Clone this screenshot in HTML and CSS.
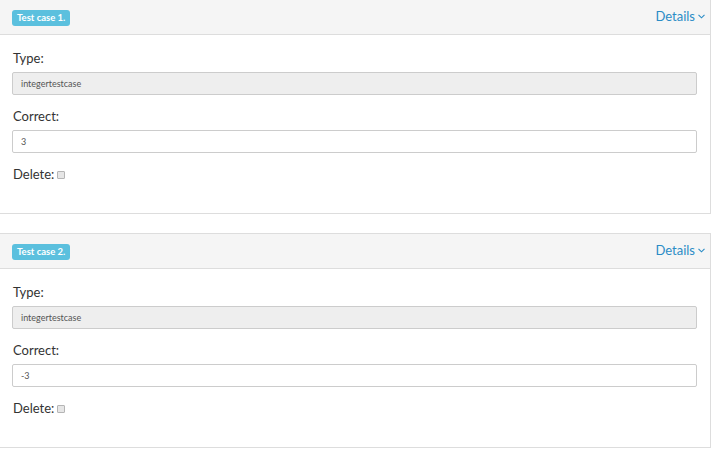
FILE: index.html
```html
<!DOCTYPE html>
<html>
<head>
<meta charset="utf-8">
<link rel="stylesheet" href="styles.css">
</head>
<body>
<div class="list">
  <div class="panel">
    <div class="panel-heading">
      <span class="badge">Test case 1.</span>
      <a class="details">Details <svg class="chev" width="7" height="5" viewBox="0 0 7 5"><path d="M0.5 0.8 L3.5 3.8 L6.5 0.8" fill="none" stroke="currentColor" stroke-width="1.1"/></svg></a>
    </div>
    <div class="panel-body">
      <div class="group">
        <label class="lbl">Type:</label>
        <div class="input disabled">integertestcase</div>
      </div>
      <div class="group">
        <label class="lbl">Correct:</label>
        <div class="input">3</div>
      </div>
      <div class="group">
        <label class="lbl">Delete: <input type="checkbox" class="cb"></label>
      </div>
    </div>
  </div>
  <div class="panel">
    <div class="panel-heading">
      <span class="badge">Test case 2.</span>
      <a class="details">Details <svg class="chev" width="7" height="5" viewBox="0 0 7 5"><path d="M0.5 0.8 L3.5 3.8 L6.5 0.8" fill="none" stroke="currentColor" stroke-width="1.1"/></svg></a>
    </div>
    <div class="panel-body">
      <div class="group">
        <label class="lbl">Type:</label>
        <div class="input disabled">integertestcase</div>
      </div>
      <div class="group">
        <label class="lbl">Correct:</label>
        <div class="input">-3</div>
      </div>
      <div class="group">
        <label class="lbl">Delete: <input type="checkbox" class="cb"></label>
      </div>
    </div>
  </div>
</div>
</body>
</html>
```
FILE: styles.css
```css
html, body {
  margin: 0;
  padding: 0;
  background: #fff;
}
body {
  font-family: Lato, "Open Sans", sans-serif;
  color: #333;
  width: 712px;
  height: 450px;
  overflow: hidden;
}
.list {
  margin: -1px 0 0 -1px;
  display: flex;
  flex-direction: column;
  gap: 19px;
}
.panel {
  width: 712px;
  box-sizing: border-box;
  border: 1px solid #dddddd;
  background: #fff;
}
.panel-heading {
  height: 35px;
  box-sizing: border-box;
  background: #f5f5f5;
  border-bottom: 1px solid #dddddd;
  display: flex;
  align-items: center;
  justify-content: space-between;
  padding: 0 5px 0 12px;
}
.badge {
  background: #5bc0de;
  color: #fff;
  font-weight: bold;
  font-size: 9.5px;
  line-height: 16px;
  height: 16px;
  padding: 0 5px;
  border-radius: 3px;
  margin-top: 1px;
}
.details {
  color: #2a8cc6;
  font-size: 13px;
  display: flex;
  align-items: center;
  gap: 3px;
  margin-bottom: 2px;
}
.chev {
  margin-top: 1px;
}
.panel-body {
  height: 178px;
  box-sizing: border-box;
  padding: 14px 13px 0 12px;
}
.group {
  margin-bottom: 12px;
}
.lbl {
  display: flex;
  align-items: center;
  gap: 3px;
  font-size: 13px;
  line-height: 18px;
  height: 18px;
  margin-bottom: 5px;
  padding-left: 1px;
  color: #333;
}
.input {
  height: 23px;
  box-sizing: border-box;
  border: 1px solid #cccccc;
  border-radius: 2px;
  font-size: 9px;
  line-height: 21px;
  padding: 0 8px;
  color: #555;
  background: #fff;
}
.input.disabled {
  background: #eeeeee;
}
.cb {
  -webkit-appearance: none;
  appearance: none;
  width: 8px;
  height: 8px;
  margin: 1px 0 0 0;
  border: 1px solid #b5b5b5;
  border-radius: 1px;
  background: #e6e6e6;
  box-sizing: border-box;
}
```
